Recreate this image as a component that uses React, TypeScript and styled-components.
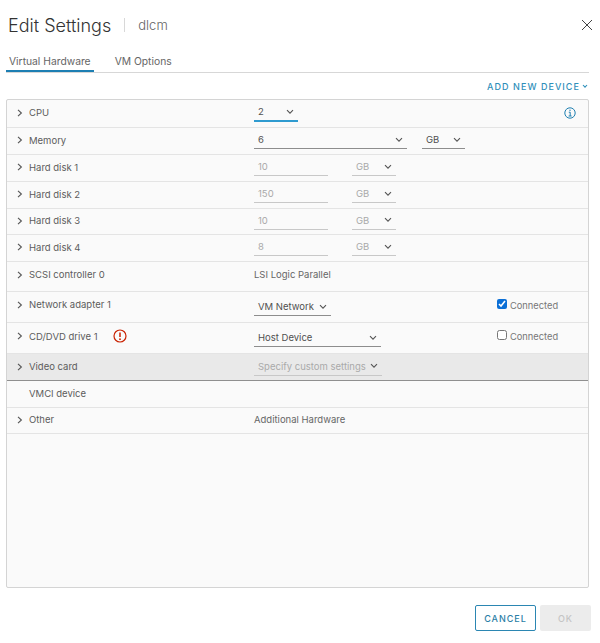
import React from "react";
import styled, {createGlobalStyle} from "styled-components";

const GlobalStyle = createGlobalStyle`
  html, body {
    margin: 0;
    padding: 0;
    background: #fff;
  }
  body {
    font-family: Inter, "Open Sans", "Liberation Sans", sans-serif;
    color: #565656;
  }
`;

const Dialog = styled.div`
  width: 600px;
  height: 643px;
  box-sizing: border-box;
  padding: 11px 11px 0 6px;
  display: flex;
  flex-direction: column;
`;

const Header = styled.div`
  height: 28px;
  display: flex;
  align-items: center;
  padding-left: 2px;
`;

const Title = styled.div`
  font-size: 18px;
  font-weight: 300;
  color: #333;
`;

const Divider = styled.div`
  width: 1px;
  height: 14px;
  background: #d8d8d8;
  margin: 0 13px;
`;

const Subtitle = styled.div`
  font-size: 13px;
  font-weight: 300;
  color: #666;
  flex: 1;
`;

const CloseButton = styled.button`
  border: 0;
  background: none;
  padding: 0;
  width: 12px;
  height: 12px;
  display: flex;
  margin-right: -4px;
  color: #444;
`;

const Tabs = styled.div`
  display: flex;
  height: 33px;
  border-bottom: 1px solid #d7d7d7;
  align-items: stretch;
`;

const Tab = styled.div<{ $active?: boolean }>`
  font-size: 10.3px;
  color: #666;
  padding: 16px 3px 0 3px;
  margin-right: 18px;
  box-sizing: border-box;
  height: 33px;
  border-bottom: ${p => (p.$active ? "2px solid #1d7fb3" : "0")};
`;

const ActionBar = styled.div`
  height: 26px;
  display: flex;
  justify-content: flex-end;
  align-items: center;
  box-sizing: border-box;
`;

const AddDevice = styled.span`
  font-size: 9px;
  font-weight: 500;
  letter-spacing: 1.05px;
  color: #2f8fba;
  display: flex;
  align-items: center;
  gap: 2px;
  margin-right: 1px;
`;

const Table = styled.div`
  height: 489px;
  box-sizing: border-box;
  border: 1px solid #d4d4d4;
  border-radius: 2px;
  background: #fafafa;
`;

const Row = styled.div<{ $h: number; $shaded?: boolean }>`
  height: ${p => p.$h}px;
  box-sizing: border-box;
  display: grid;
  grid-template-columns: 247px 243px 1fr;
  align-items: center;
  padding-bottom: ${p => (p.$shaded ? 1 : 2)}px;
  border-bottom: 1px solid ${p => (p.$shaded ? "#8f8f8f" : "#e4e4e4")};
  background: ${p => (p.$shaded ? "#e9e9e9" : "transparent")};
`;

const LabelCell = styled.div<{ $up?: number }>`
  display: flex;
  align-items: center;
  font-size: 9.5px;
  color: #5c5c5c;
  padding-left: 10px;
  margin-top: ${p => -(p.$up ?? 0)}px;
`;

const Arrow = styled.span`
  width: 12px;
  display: flex;
  color: #555;
`;

const ValueCell = styled.div<{ $up?: number; $down?: number }>`
  display: flex;
  align-items: center;
  font-size: 9.5px;
  margin-top: ${p => p.$down ?? 0}px;
  margin-bottom: ${p => p.$up ?? 0}px;
`;

const Field = styled.div<{ $w: number; $ml?: number; $muted?: boolean; $focus?: boolean }>`
  width: ${p => p.$w}px;
  height: 18px;
  margin-left: ${p => p.$ml ?? 0}px;
  box-sizing: border-box;
  display: flex;
  align-items: center;
  justify-content: space-between;
  padding: 0 4px 0 4px;
  font-size: 9.5px;
  color: ${p => (p.$muted ? "#a9a9a9" : "#505050")};
  border-bottom: 1px solid ${p => (p.$focus ? "#2f9bd0" : p.$muted ? "#c8c8c8" : "#8d8d8d")};
  border-bottom-width: ${p => (p.$focus ? "2px" : "1px")};
`;

const PlainValue = styled.span`
  color: #666;
`;

const CheckCell = styled.label`
  display: flex;
  align-items: center;
  gap: 3px;
  font-size: 9.3px;
  color: #777;
  margin-bottom: 2px;
`;

const Check = styled.input`
  margin: 0 0 2px 0;
  width: 10px;
  height: 10px;
  accent-color: #0b6fd6;
`;

const InfoIcon = styled.span`
  display: flex;
  justify-self: end;
  margin-right: 12px;
  color: #1f7fb0;
`;

const ErrorIcon = styled.span`
  display: flex;
  margin-left: 15px;
  margin-top: -1px;
  color: #c92100;
`;

const Footer = styled.div`
  display: flex;
  justify-content: flex-end;
  gap: 4px;
  margin-top: 17px;
  margin-right: -2px;
`;

const FooterButton = styled.button<{ $disabled?: boolean }>`
  width: ${p => (p.$disabled ? "51px" : "61px")};
  height: 26px;
  box-sizing: border-box;
  border-radius: 2px;
  font-family: inherit;
  font-size: 9px;
  font-weight: 500;
  letter-spacing: 1px;
  padding: 0;
  background: ${p => (p.$disabled ? "#ececec" : "#fff")};
  color: ${p => (p.$disabled ? "#c4c4c4" : "#2b7ea6")};
  border: ${p => (p.$disabled ? "0" : "1px solid #2b86b2")};
`;

const Chevron = () => (
    <svg width="8" height="6" viewBox="0 0 8 6" fill="none" stroke="#555" strokeWidth="1.1">
        <path d="M1 1.2 L4 4.2 L7 1.2"/>
    </svg>
)

const SmallChevron = () => (
    <svg width="6" height="5" viewBox="0 0 6 5" fill="none" stroke="#2f8fba" strokeWidth="1.1">
        <path d="M1 1 L3 3.2 L5 1"/>
    </svg>
)

const RightArrow = () => (
    <svg width="6" height="8" viewBox="0 0 6 8" fill="none" stroke="#555" strokeWidth="1.1">
        <path d="M1 0.8 L4.4 4 L1 7.2"/>
    </svg>
)

const disks = [
    {name: "Hard disk 1", size: "10", height: 27},
    {name: "Hard disk 2", size: "150", height: 27},
    {name: "Hard disk 3", size: "10", height: 26},
    {name: "Hard disk 4", size: "8", height: 27},
]

const App = () => {
    return (
        <Dialog>
            <GlobalStyle/>
            <Header>
                <Title>Edit Settings</Title>
                <Divider/>
                <Subtitle>dlcm</Subtitle>
                <CloseButton aria-label="close">
                    <svg width="12" height="12" viewBox="0 0 12 12" stroke="#444" strokeWidth="1">
                        <path d="M1 1 L11 11 M11 1 L1 11"/>
                    </svg>
                </CloseButton>
            </Header>
            <Tabs>
                <Tab $active>Virtual Hardware</Tab>
                <Tab>VM Options</Tab>
            </Tabs>
            <ActionBar>
                <AddDevice>ADD NEW DEVICE <SmallChevron/></AddDevice>
            </ActionBar>
            <Table>
                <Row $h={28}>
                    <LabelCell><Arrow><RightArrow/></Arrow>CPU</LabelCell>
                    <ValueCell><Field $w={44} $focus>2 <Chevron/></Field></ValueCell>
                    <InfoIcon>
                        <svg width="12" height="12" viewBox="0 0 12 12" fill="none" stroke="currentColor">
                            <circle cx="6" cy="6" r="5.2"/>
                            <path d="M4.8 5.2 H6.2 V9 M4.6 9 H7.6" strokeWidth="1"/>
                            <circle cx="6" cy="3.2" r="0.7" fill="currentColor" stroke="none"/>
                        </svg>
                    </InfoIcon>
                </Row>
                <Row $h={27}>
                    <LabelCell><Arrow><RightArrow/></Arrow>Memory</LabelCell>
                    <ValueCell>
                        <Field $w={153}>6 <Chevron/></Field>
                        <Field $w={43} $ml={15}>GB <Chevron/></Field>
                    </ValueCell>
                </Row>
                {disks.map(el => (
                    <Row $h={el.height} key={el.name}>
                        <LabelCell><Arrow><RightArrow/></Arrow>{el.name}</LabelCell>
                        <ValueCell>
                            <Field $w={74} $muted>{el.size}</Field>
                            <Field $w={44} $ml={24} $muted>GB <Chevron/></Field>
                        </ValueCell>
                    </Row>
                ))}
                <Row $h={30}>
                    <LabelCell $up={2}><Arrow><RightArrow/></Arrow>SCSI controller 0</LabelCell>
                    <ValueCell $up={2}><PlainValue>LSI Logic Parallel</PlainValue></ValueCell>
                </Row>
                <Row $h={31}>
                    <LabelCell $up={3}><Arrow><RightArrow/></Arrow>Network adapter 1</LabelCell>
                    <ValueCell $down={2}><Field $w={77}>VM Network <Chevron/></Field></ValueCell>
                    <CheckCell><Check type="checkbox" defaultChecked/>Connected</CheckCell>
                </Row>
                <Row $h={31}>
                    <LabelCell $up={2}>
                        <Arrow><RightArrow/></Arrow>CD/DVD drive 1
                        <ErrorIcon>
                            <svg width="14" height="14" viewBox="0 0 14 14" fill="none" stroke="currentColor" strokeWidth="1.2">
                                <circle cx="7" cy="7" r="6"/>
                                <path d="M7 3.4 V8" strokeWidth="1.5"/>
                                <circle cx="7" cy="10.2" r="0.9" fill="currentColor" stroke="none"/>
                            </svg>
                        </ErrorIcon>
                    </LabelCell>
                    <ValueCell $down={2}><Field $w={127}>Host Device <Chevron/></Field></ValueCell>
                    <CheckCell><Check type="checkbox"/>Connected</CheckCell>
                </Row>
                <Row $h={27} $shaded>
                    <LabelCell><Arrow><RightArrow/></Arrow>Video card</LabelCell>
                    <ValueCell><Field $w={128} $muted>Specify custom settings <Chevron/></Field></ValueCell>
                </Row>
                <Row $h={27}>
                    <LabelCell><Arrow/>VMCI device</LabelCell>
                </Row>
                <Row $h={26}>
                    <LabelCell><Arrow><RightArrow/></Arrow>Other</LabelCell>
                    <ValueCell><PlainValue>Additional Hardware</PlainValue></ValueCell>
                </Row>
            </Table>
            <Footer>
                <FooterButton>CANCEL</FooterButton>
                <FooterButton $disabled>OK</FooterButton>
            </Footer>
        </Dialog>
    )
}

export default App;
